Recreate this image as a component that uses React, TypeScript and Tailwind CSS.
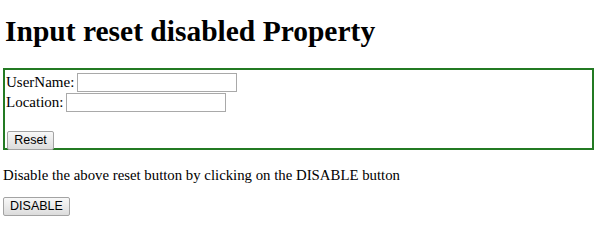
export default function App() {
  const btn =
    "h-[19px] px-[6px] border border-[#a3a3a3] rounded-[2px] bg-gradient-to-b from-[#f8f8f8] to-[#dcdcdc] text-[12.5px] leading-none text-black font-['Liberation_Sans',Arial,sans-serif]";
  const input = "h-[19px] border border-[#a9a9a9] bg-white w-[160px]";

  return (
    <div className="w-[600px] h-[231px] bg-white px-[3px] text-black font-['Liberation_Serif','Times_New_Roman',serif] text-[15px]">
      <h1 className="pt-[15px] pl-[2px] text-[29.5px] leading-[33px] font-bold">
        Input reset disabled Property
      </h1>

      <form className="mt-[20px] h-[82px] w-[591px] border-2 border-[#237a23] pl-[1px] pt-[2px]">
        <div className="flex h-[20px] items-center">
          <label className="leading-[20px]">UserName:</label>
          <input type="text" className={`ml-[3px] mt-[1px] ${input}`} />
        </div>
        <div className="flex h-[20px] items-center">
          <label className="leading-[20px]">Location:</label>
          <input type="text" className={`ml-[3px] ${input}`} />
        </div>
        <div className="mt-[16px] pl-[1px]">
          <button type="reset" className={`${btn} w-[47px]`}>
            Reset
          </button>
        </div>
      </form>

      <p className="mt-[15px] leading-[20px] text-[14.8px]">
        Disable the above reset button by clicking on the DISABLE button
      </p>

      <button type="button" className={`mt-[12px] w-[67px] ${btn}`}>
        DISABLE
      </button>
    </div>
  );
}
